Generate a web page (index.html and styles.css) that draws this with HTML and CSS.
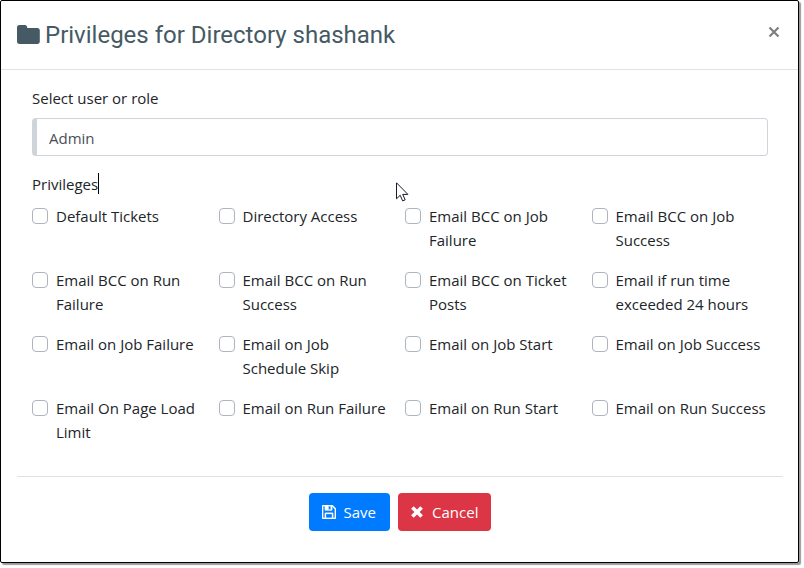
FILE: index.html
```html
<!DOCTYPE html>
<html lang="en">
<head>
    <meta charset="UTF-8">
    <meta name="viewport" content="width=device-width, initial-scale=1.0">
    <title>Privileges for Directory shashank</title>
    <link rel="stylesheet" href="styles.css">
</head>
<body>
    <form class="modal">
        <div class="modal-header">
            <svg class="folder-icon" viewBox="0 0 23 19"><path d="M2.5 0h5.2a2.5 2.5 0 0 1 2.5 2.5v.4h10A2.6 2.6 0 0 1 22.8 5.5v10.8a2.6 2.6 0 0 1-2.6 2.6H2.6A2.6 2.6 0 0 1 0 16.3V2.5A2.5 2.5 0 0 1 2.5 0z"/></svg>
            <h1>Privileges for Directory shashank</h1>
            <button type="button" class="close" aria-label="Close">
                <svg viewBox="0 0 12 12"><path d="M1.5 1.5l9 9M10.5 1.5l-9 9"/></svg>
            </button>
        </div>
        <div class="modal-body">
            <div class="form-group">
                <label for="role">Select user or role</label>
                <select id="role" class="form-control">
                    <option>Admin</option>
                </select>
            </div>
            <fieldset>
                <legend>Privileges<span class="caret"></span></legend>
                <div class="privileges">
                    <label class="check"><input type="checkbox"><span>Default Tickets</span></label>
                    <label class="check"><input type="checkbox"><span>Directory Access</span></label>
                    <label class="check"><input type="checkbox"><span>Email BCC on Job Failure</span></label>
                    <label class="check"><input type="checkbox"><span>Email BCC on Job Success</span></label>
                    <label class="check"><input type="checkbox"><span>Email BCC on Run Failure</span></label>
                    <label class="check"><input type="checkbox"><span>Email BCC on Run Success</span></label>
                    <label class="check"><input type="checkbox"><span>Email BCC on Ticket Posts</span></label>
                    <label class="check"><input type="checkbox"><span>Email if run time exceeded 24 hours</span></label>
                    <label class="check"><input type="checkbox"><span>Email on Job Failure</span></label>
                    <label class="check"><input type="checkbox"><span>Email on Job Schedule Skip</span></label>
                    <label class="check"><input type="checkbox"><span>Email on Job Start</span></label>
                    <label class="check"><input type="checkbox"><span>Email on Job Success</span></label>
                    <label class="check"><input type="checkbox"><span>Email On Page Load Limit</span></label>
                    <label class="check"><input type="checkbox"><span>Email on Run Failure</span></label>
                    <label class="check"><input type="checkbox"><span>Email on Run Start</span></label>
                    <label class="check"><input type="checkbox"><span>Email on Run Success</span></label>
                </div>
            </fieldset>
        </div>
        <div class="modal-footer">
            <button type="button" class="btn btn-save">
                <svg viewBox="0 0 14 14"><path fill-rule="evenodd" d="M1 0h9.5L14 3.5V13a1 1 0 0 1-1 1H1a1 1 0 0 1-1-1V1a1 1 0 0 1 1-1zM1.2 1.2v11.6h1.6V8.5a.8.8 0 0 1 .8-.8h6.8a.8.8 0 0 1 .8.8v4.3h1.6V4.200l-2.6-2.8v3.4a.8.8 0 0 1-.8.8H3.6a.8.8 0 0 1-.8-.8V1.200zM6.5 1.2v3.200h2.200V1.2zM4 8.9v3.9h6V8.9z"/></svg>
                Save
            </button>
            <button type="button" class="btn btn-cancel">
                <svg viewBox="0 0 14 14"><path d="M3.7 1.3L7 4.5l3.3-3.2 2.6 2.5L9.6 7l3.3 3.2-2.6 2.5L7 9.5l-3.3 3.2-2.6-2.5L4.4 7 1.100 3.8z"/></svg>
                Cancel
            </button>
        </div>
    </form>
    <svg class="pointer" viewBox="0 0 13 20"><path d="M.5.8v16l3.7-3.5 2.5 5.6 2.5-1.1-2.5-5.4h5.2z"/></svg>
</body>
</html>
```
FILE: styles.css
```css
* {
    box-sizing: border-box;
}

body {
    margin: 0;
    padding: 0 5px 5px 0;
    background-color: white;
    font-family: "Open Sans", "Noto Sans", sans-serif;
    font-size: 15px;
    line-height: 24px;
    color: #212529;
}

.modal {
    border: 1px solid black;
    border-radius: 2px;
    box-shadow: 2px 2px 1px #999;
}

.modal-header {
    display: flex;
    align-items: center;
    padding: 16px;
    border-bottom: 1px solid #dee2e6;
    color: #455a64;
}

.folder-icon {
    width: 23px;
    height: 19px;
    margin: 0 5px 2px 0;
    fill: #455a64;
}

h1 {
    flex: 1;
    margin: 0;
    font-family: Roboto, sans-serif;
    font-size: 24px;
    font-weight: 400;
    line-height: 36px;
}

.close {
    display: flex;
    align-self: flex-start;
    padding: 9px 2px 9px 1px;
    border: none;
    background: none;
    cursor: pointer;
}

.close svg {
    width: 12px;
    height: 12px;
    stroke: #7f7f7f;
    stroke-width: 2.2;
}

.modal-body {
    padding: 16px 30px 16px 31px;
}

.form-group {
    margin-bottom: 16px;
}

.form-group label {
    display: block;
    margin-bottom: 8px;
}

.form-control {
    display: block;
    width: 100%;
    height: 38px;
    padding: 1px 12px 0;
    appearance: none;
    border: 1px solid #ced4da;
    border-left-width: 5px;
    border-radius: 4px;
    background-color: white;
    color: #495057;
    font: inherit;
}

fieldset {
    min-width: 0;
    margin: 0;
    padding: 0;
    border: none;
}

legend {
    position: relative;
    padding: 0;
    margin-bottom: 8px;
}

.caret {
    position: absolute;
    top: 1px;
    right: -1px;
    width: 1px;
    height: 21px;
    background-color: black;
}

.privileges {
    display: grid;
    grid-template-columns: repeat(4, 1fr);
    grid-auto-rows: minmax(48px, auto);
    gap: 16px 10px;
}

.check {
    display: flex;
    align-items: flex-start;
    gap: 8px;
}

.check input {
    flex: none;
    width: 16px;
    height: 16px;
    margin: 4px 0;
    appearance: none;
    border: 1px solid #adb5bd;
    border-radius: 4px;
    background-color: white;
}

.check input:checked {
    background-color: #007bff;
}

.modal-footer {
    display: flex;
    justify-content: center;
    gap: 8px;
    margin: 16px 15px 0 16px;
    padding: 16px 0 31px;
    border-top: 1px solid #dfe2e4;
}

.btn {
    display: flex;
    align-items: center;
    gap: 8px;
    height: 38px;
    padding: 0 13px;
    border: none;
    border-radius: 4px;
    color: white;
    font: inherit;
    cursor: pointer;
}

.btn svg {
    width: 14px;
    height: 14px;
    fill: white;
}

.btn-save {
    padding-right: 14px;
    background-color: #007bff;
}

.btn-save svg {
    stroke: white;
    stroke-width: 0.3;
}

.btn-cancel {
    padding-left: 12px;
    background-color: #dc3545;
}

/* mouse pointer over the dialog */
.pointer {
    position: absolute;
    left: 396px;
    top: 182px;
    width: 13px;
    height: 20px;
    fill: white;
    stroke: #1a1a2a;
}
```
